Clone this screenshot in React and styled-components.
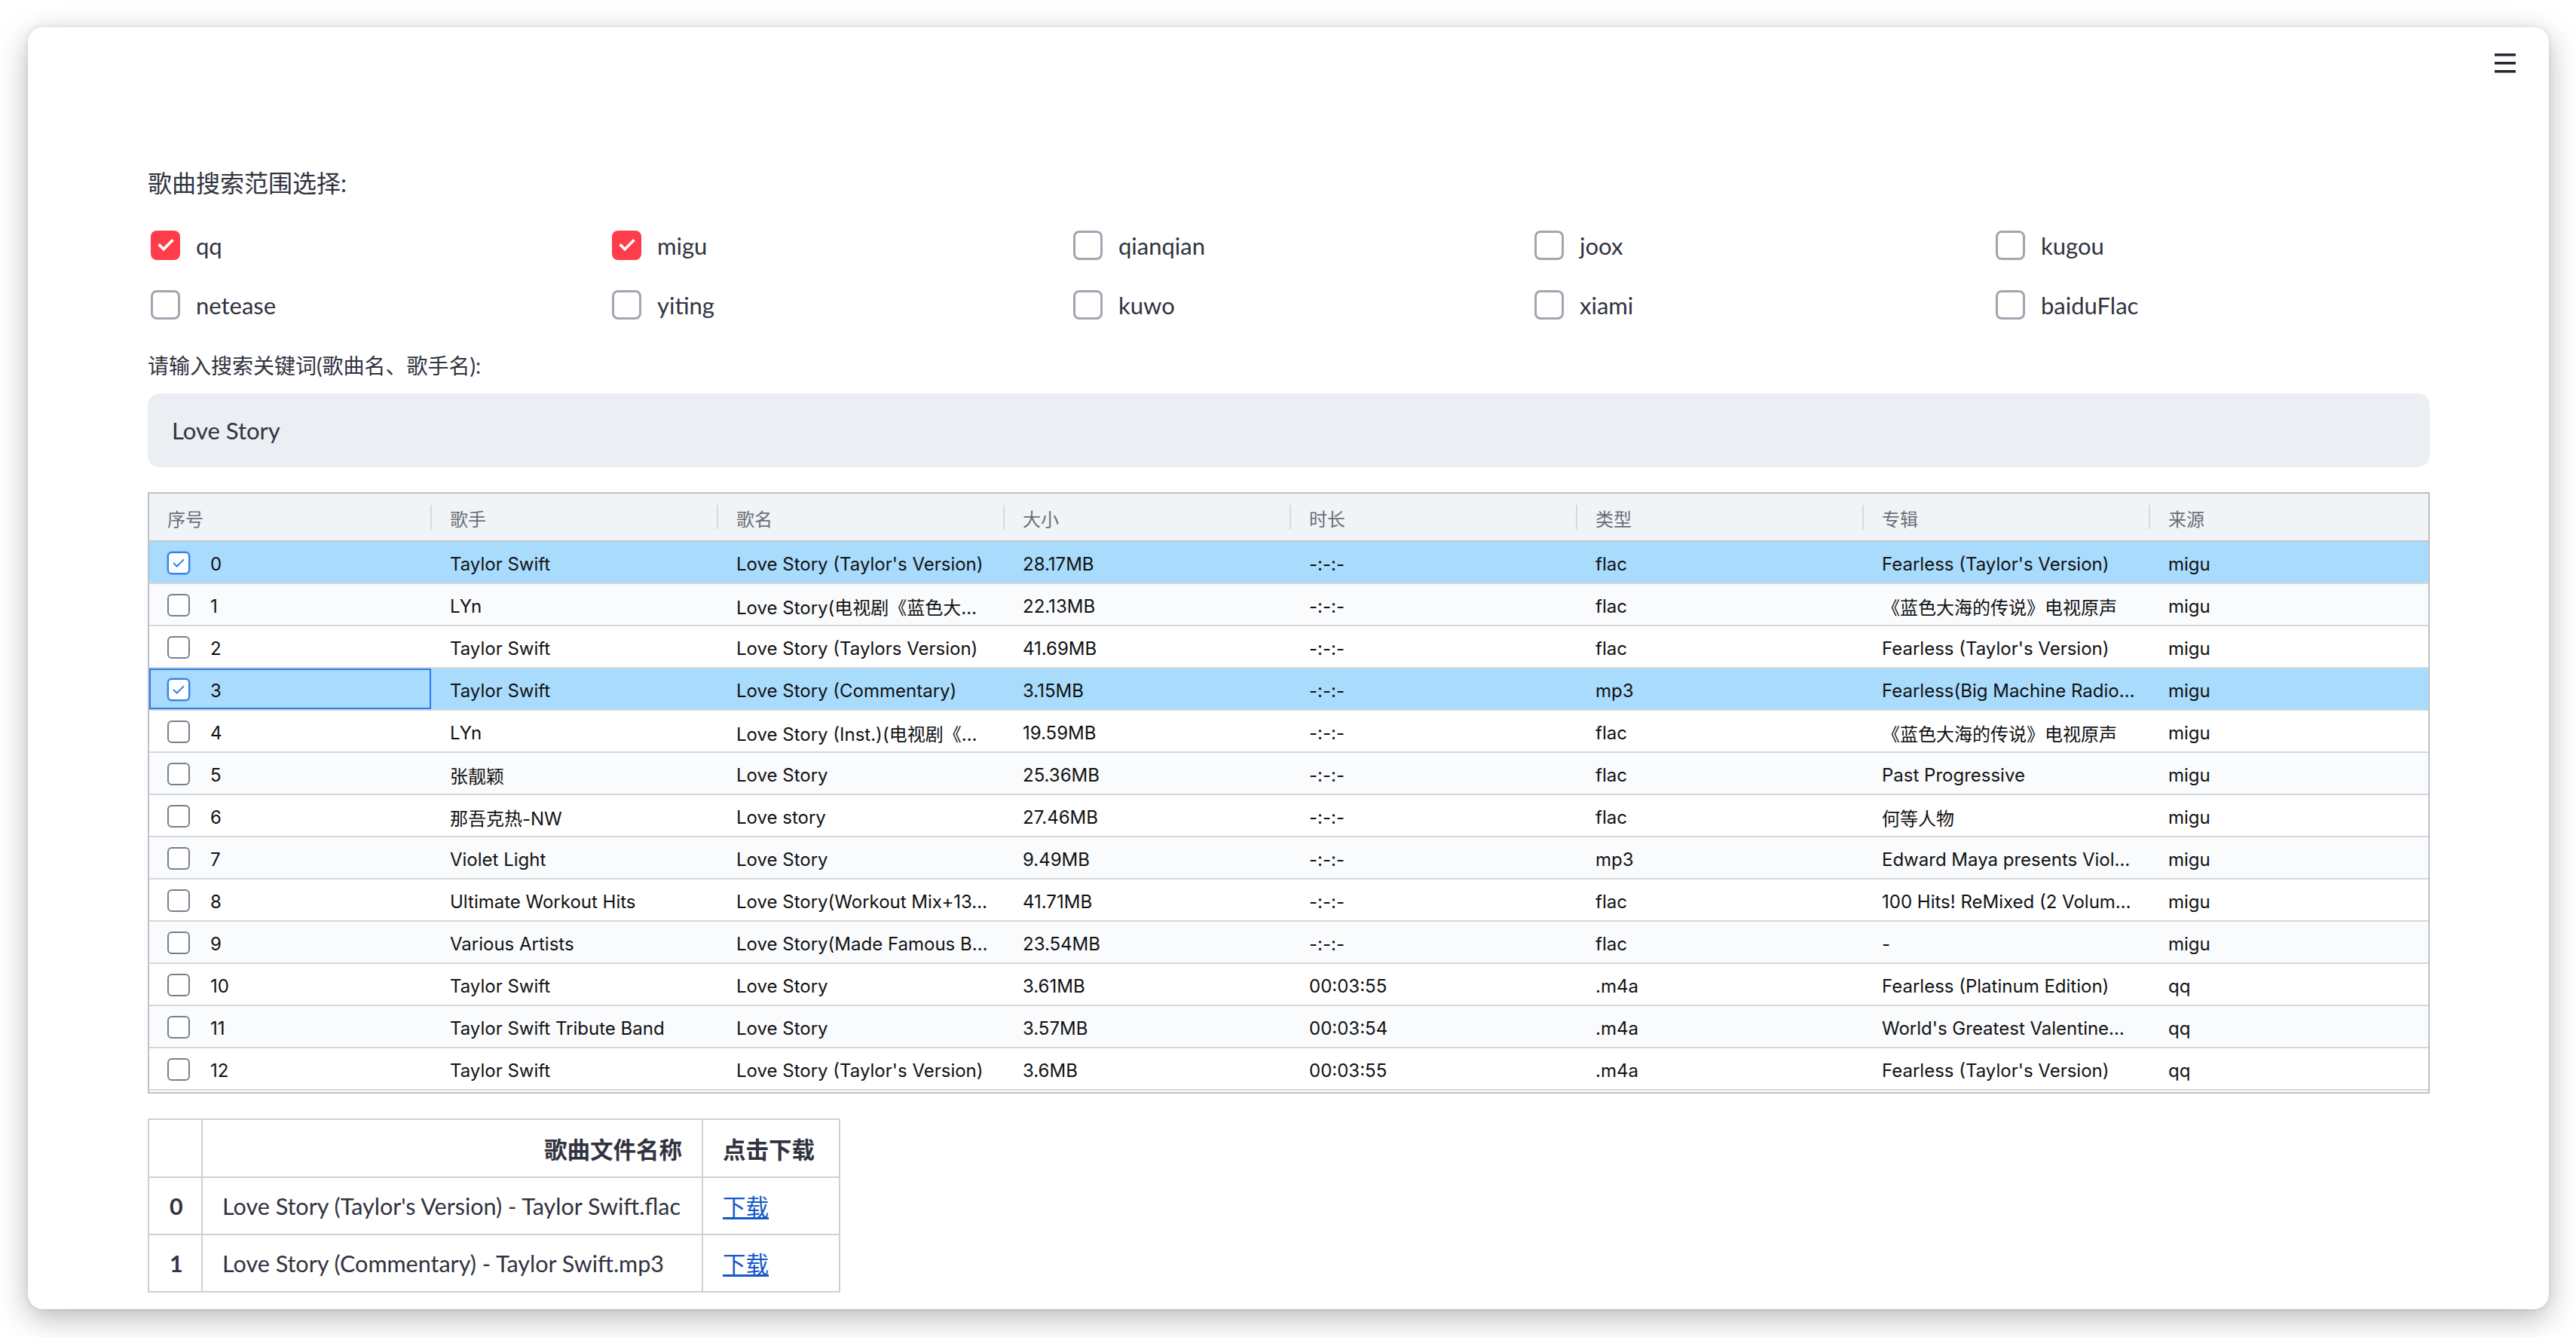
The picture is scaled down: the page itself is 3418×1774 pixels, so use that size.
import styled, { createGlobalStyle } from "styled-components";

const GlobalStyle = createGlobalStyle`
  html, body {
    margin: 0;
    padding: 0;
    background: #ffffff;
  }
  * {
    box-sizing: border-box;
  }
`;

const sources = [
  { name: "qq", checked: true },
  { name: "migu", checked: true },
  { name: "qianqian", checked: false },
  { name: "joox", checked: false },
  { name: "kugou", checked: false },
  { name: "netease", checked: false },
  { name: "yiting", checked: false },
  { name: "kuwo", checked: false },
  { name: "xiami", checked: false },
  { name: "baiduFlac", checked: false },
];

const columns = ["序号", "歌手", "歌名", "大小", "时长", "类型", "专辑", "来源"];

const songs = [
  ["Taylor Swift", "Love Story (Taylor's Version)", "28.17MB", "-:-:-", "flac", "Fearless (Taylor's Version)", "migu"],
  ["LYn", "Love Story(电视剧《蓝色大…", "22.13MB", "-:-:-", "flac", "《蓝色大海的传说》电视原声", "migu"],
  ["Taylor Swift", "Love Story (Taylors Version)", "41.69MB", "-:-:-", "flac", "Fearless (Taylor's Version)", "migu"],
  ["Taylor Swift", "Love Story (Commentary)", "3.15MB", "-:-:-", "mp3", "Fearless(Big Machine Radio…", "migu"],
  ["LYn", "Love Story (Inst.)(电视剧《…", "19.59MB", "-:-:-", "flac", "《蓝色大海的传说》电视原声", "migu"],
  ["张靓颖", "Love Story", "25.36MB", "-:-:-", "flac", "Past Progressive", "migu"],
  ["那吾克热-NW", "Love story", "27.46MB", "-:-:-", "flac", "何等人物", "migu"],
  ["Violet Light", "Love Story", "9.49MB", "-:-:-", "mp3", "Edward Maya presents Viol…", "migu"],
  ["Ultimate Workout Hits", "Love Story(Workout Mix+13…", "41.71MB", "-:-:-", "flac", "100 Hits! ReMixed (2 Volum…", "migu"],
  ["Various Artists", "Love Story(Made Famous B…", "23.54MB", "-:-:-", "flac", "-", "migu"],
  ["Taylor Swift", "Love Story", "3.61MB", "00:03:55", ".m4a", "Fearless (Platinum Edition)", "qq"],
  ["Taylor Swift Tribute Band", "Love Story", "3.57MB", "00:03:54", ".m4a", "World's Greatest Valentine…", "qq"],
  ["Taylor Swift", "Love Story (Taylor's Version)", "3.6MB", "00:03:55", ".m4a", "Fearless (Taylor's Version)", "qq"],
];

const selectedRows = [0, 3];

const downloads = [
  "Love Story (Taylor's Version) - Taylor Swift.flac",
  "Love Story (Commentary) - Taylor Swift.mp3",
];

function MenuIcon() {
  return (
    <svg width="28" height="26" viewBox="0 0 28 26">
      <rect x="0" y="0" width="28" height="3.5" fill="#262730" />
      <rect x="0" y="11" width="28" height="3.5" fill="#262730" />
      <rect x="0" y="22" width="28" height="3.5" fill="#262730" />
    </svg>
  );
}

function SourceCheck({ name, checked }) {
  return (
    <CheckItem>
      <Box $checked={checked}>
        {checked && (
          <svg width="26" height="26" viewBox="0 0 24 24">
            <path d="M4.5 12.5l4.8 4.8L19.5 7" fill="none" stroke="#fff" strokeWidth="3.4" strokeLinecap="square" />
          </svg>
        )}
      </Box>
      <CheckLabel>{name}</CheckLabel>
    </CheckItem>
  );
}

function RowCheck({ checked }) {
  return (
    <GridBox $checked={checked}>
      {checked && (
        <svg width="22" height="22" viewBox="0 0 24 24">
          <path d="M5 12.5l4.5 4.5L19 7.5" fill="none" stroke="#2f7ff0" strokeWidth="2.2" strokeLinecap="round" strokeLinejoin="round" />
        </svg>
      )}
    </GridBox>
  );
}

export default function App() {
  return (
    <>
      <GlobalStyle />
      <Page>
        <Window>
          <Toolbar>
            <MenuIcon />
          </Toolbar>
          <Main>
            <Heading>歌曲搜索范围选择:</Heading>
            <SourceGrid>
              {sources.map((s) => (
                <SourceCheck key={s.name} name={s.name} checked={s.checked} />
              ))}
            </SourceGrid>
            <FieldLabel>请输入搜索关键词(歌曲名、歌手名):</FieldLabel>
            <SearchInput defaultValue="Love Story" />
            <DataGrid>
              <HeaderRow>
                {columns.map((c, i) => (
                  <HeaderCell key={c} $first={i === 0}>
                    {c}
                  </HeaderCell>
                ))}
              </HeaderRow>
              {songs.map((row, i) => {
                const selected = selectedRows.includes(i);
                return (
                  <GridRow key={i} $selected={selected} $striped={i % 2 === 1}>
                    <IndexCell $focused={i === 3}>
                      <RowCheck checked={selected} />
                      <span>{i}</span>
                    </IndexCell>
                    {row.map((v, j) => (
                      <Cell key={j}>{v}</Cell>
                    ))}
                  </GridRow>
                );
              })}
            </DataGrid>
            <DownloadTable>
              <colgroup>
                <Col $w={71} />
                <Col $w={664} />
                <Col $w={182} />
              </colgroup>
              <thead>
                <tr>
                  <Th />
                  <Th $right>歌曲文件名称</Th>
                  <Th>点击下载</Th>
                </tr>
              </thead>
              <tbody>
                {downloads.map((d, i) => (
                  <tr key={d}>
                    <IndexTh>{i}</IndexTh>
                    <Td>{d}</Td>
                    <Td>
                      <DownloadLink href="#">下载</DownloadLink>
                    </Td>
                  </tr>
                ))}
              </tbody>
            </DownloadTable>
          </Main>
        </Window>
      </Page>
    </>
  );
}

const mainFont = `"Lato", "Noto Sans CJK SC", sans-serif`;
const gridFont = `"Inter", "Noto Sans CJK SC", sans-serif`;

const Page = styled.div`
  width: 3418px;
  height: 1774px;
  padding: 36px 36px 37px 37px;
  background: #ffffff;
  overflow: hidden;
`;

const Window = styled.div`
  width: 3345px;
  height: 1701px;
  background: #ffffff;
  border-radius: 20px;
  box-shadow: 0 12px 40px rgba(0, 0, 0, 0.28), 0 0 10px rgba(0, 0, 0, 0.08);
  display: flex;
  flex-direction: column;
  font-family: ${mainFont};
  color: #31333f;
`;

const Toolbar = styled.div`
  display: flex;
  justify-content: flex-end;
  padding: 35px 44px 0 0;
  line-height: 0;
`;

const Main = styled.div`
  padding: 120px 158px 0 159px;
  display: flex;
  flex-direction: column;
`;

const Heading = styled.div`
  font-size: 32px;
  line-height: 51px;
  height: 51px;
`;

const SourceGrid = styled.div`
  margin-top: 33px;
  display: grid;
  grid-template-columns: repeat(5, 580px);
  column-gap: 32px;
  row-gap: 31px;
`;

const CheckItem = styled.label`
  display: flex;
  align-items: center;
  height: 48px;
  gap: 21px;
`;

const Box = styled.span`
  width: 39px;
  height: 39px;
  margin-left: 4px;
  border-radius: 8px;
  display: flex;
  align-items: center;
  justify-content: center;
  background: ${(p) => (p.$checked ? "#ff3d4a" : "#ffffff")};
  border: ${(p) => (p.$checked ? "none" : "3px solid #a3a6b0")};
`;

const CheckLabel = styled.span`
  font-size: 31px;
  line-height: 40px;
  padding-top: 1px;
`;

const FieldLabel = styled.div`
  margin-top: 37px;
  font-size: 28px;
  line-height: 40px;
  height: 40px;
`;

const SearchInput = styled.input`
  margin-top: 17px;
  height: 98px;
  width: 100%;
  border: none;
  outline: none;
  border-radius: 16px;
  background: #ebeef3;
  padding: 0 32px;
  font-family: ${mainFont};
  font-size: 31px;
  color: #31333f;
`;

const DataGrid = styled.div`
  margin-top: 33px;
  height: 798px;
  border: 2px solid #bcc0c6;
  padding-bottom: 2px;
  overflow: hidden;
  font-family: ${gridFont};
  font-size: 24px;
`;

const gridColumns = `374px repeat(6, 380px) 1fr`;

const HeaderRow = styled.div`
  display: grid;
  grid-template-columns: ${gridColumns};
  height: 64px;
  background: #f1f4f6;
  border-bottom: 2px solid #bfc3c9;
`;

const HeaderCell = styled.div`
  position: relative;
  display: flex;
  align-items: center;
  padding: 3px 0 0 ${(p) => (p.$first ? "24px" : "25px")};
  color: #6b6e78;
  &::before {
    content: "";
    display: ${(p) => (p.$first ? "none" : "block")};
    position: absolute;
    left: -1px;
    top: 15px;
    width: 2px;
    height: 32px;
    background: #d6d9dd;
  }
`;

const GridRow = styled.div`
  display: grid;
  grid-template-columns: ${gridColumns};
  height: 56px;
  border-bottom: 2px solid #d5d8dc;
  background: ${(p) => (p.$selected ? "#a8dbfc" : p.$striped ? "#f9fbfd" : "#ffffff")};
  color: #111111;
`;

const Cell = styled.div`
  display: flex;
  align-items: center;
  padding: 4px 0 0 25px;
  white-space: nowrap;
  overflow: hidden;
`;

const IndexCell = styled.div`
  display: flex;
  align-items: center;
  gap: 27px;
  padding: 2px 0 0 24px;
  box-shadow: ${(p) => (p.$focused ? "inset 0 0 0 2px #2c7be5" : "none")};
  & > span:last-child {
    padding-top: 2px;
  }
`;

const GridBox = styled.span`
  width: 30px;
  height: 30px;
  border-radius: 6px;
  background: #ffffff;
  display: flex;
  align-items: center;
  justify-content: center;
  border: 2px solid ${(p) => (p.$checked ? "#2f7ff0" : "#76808a")};
  box-shadow: ${(p) => (p.$checked ? "0 0 0 1px rgba(47,127,240,0.35)" : "none")};
`;

const DownloadTable = styled.table`
  margin-top: 33px;
  border-collapse: collapse;
  table-layout: fixed;
  width: 917px;
  font-size: 30.5px;
  color: #31333f;
  align-self: flex-start;
`;

const Col = styled.col`
  width: ${(p) => p.$w}px;
`;

const Th = styled.th`
  height: 77px;
  border: 2px solid #cfd0d3;
  padding: 0 26px;
  font-weight: 700;
  white-space: nowrap;
  text-align: ${(p) => (p.$right ? "right" : "left")};
`;

const IndexTh = styled.th`
  height: 76px;
  border: 2px solid #cfd0d3;
  padding: 0 27px;
  font-weight: 700;
  text-align: left;
`;

const Td = styled.td`
  height: 76px;
  border: 2px solid #cfd0d3;
  padding: 0 26px;
  white-space: nowrap;
  overflow: hidden;
`;

const DownloadLink = styled.a`
  color: #1658c8;
  text-decoration: underline;
`;
